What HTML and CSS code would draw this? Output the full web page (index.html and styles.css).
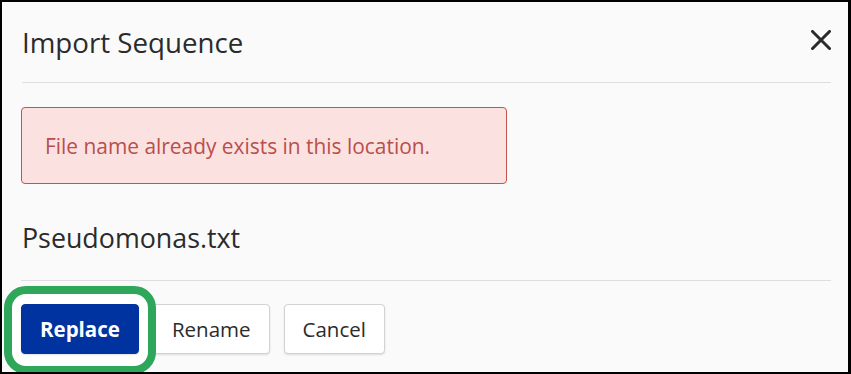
FILE: index.html
```html
<!DOCTYPE html>
<html lang="en">
<head>
  <meta charset="UTF-8">
  <meta name="viewport" content="width=device-width, initial-scale=1.0">
  <title>Import Sequence</title>
  <link rel="stylesheet" href="styles.css">
</head>
<body>
  <div class="dialog">
    <!-- Header -->
    <div class="dialog-header">
      <h2>Import Sequence</h2>
      <button class="close-btn" aria-label="Close">
        <svg width="20" height="20" viewBox="0 0 20 20">
          <path d="M1.5 1.5 L18.5 18.5 M18.5 1.5 L1.5 18.5" stroke="#2b2b2b" stroke-width="3" stroke-linecap="square"/>
        </svg>
      </button>
    </div>

    <!-- Body -->
    <div class="dialog-body">
      <div class="alert">File name already exists in this location.</div>
      <p class="file-name">Pseudomonas.txt</p>
    </div>

    <!-- Footer -->
    <div class="dialog-footer">
      <span class="highlight-ring"></span>
      <button class="btn btn-primary">Replace</button>
      <button class="btn">Rename</button>
      <button class="btn">Cancel</button>
    </div>
  </div>
</body>
</html>
```

FILE: styles.css
```css
html, body {
  margin: 0;
  padding: 0;
}
body {
  font-family: "Open Sans", "Noto Sans", Arial, sans-serif;
  color: #2b2b2b;
  background: #fafafa;
}
.dialog {
  position: relative;
  box-sizing: border-box;
  width: 851px;
  height: 374px;
  border-style: solid;
  border-color: #000;
  border-width: 2px 3px 2px 2px;
  background: #fafafa;
  overflow: hidden;
}
.dialog-header {
  display: flex;
  align-items: center;
  justify-content: space-between;
  height: 80px;
  margin: 0 17px 0 20px;
  border-bottom: 1px solid #dedede;
}
.dialog-header h2 {
  margin: 0;
  font-size: 27.7px;
  font-weight: 500;
  color: #2b2b2b;
}
.close-btn {
  display: flex;
  align-items: center;
  justify-content: center;
  width: 20px;
  height: 20px;
  padding: 0;
  margin-top: -4px;
  border: none;
  background: none;
}
.dialog-body {
  margin: 0 17px 0 19px;
  padding-top: 24px;
  height: 173px;
  border-bottom: 1px solid #dedede;
}
.alert {
  box-sizing: border-box;
  width: 486px;
  height: 77px;
  padding: 0 23px;
  display: flex;
  align-items: center;
  background: #fbe2e1;
  border: 1px solid #c4524f;
  border-radius: 4px;
  color: #b84f4c;
  font-size: 20.9px;
}
.file-name {
  margin: 36px 0 0 1px;
  font-size: 26.8px;
  line-height: 36px;
  color: #2b2b2b;
}
.dialog-footer {
  display: flex;
  gap: 14px;
  padding: 23px 0 0 19px;
}
.btn {
  height: 50px;
  padding: 0 18px;
  border: 1px solid #d2d2d2;
  border-radius: 4px;
  background: #fff;
  box-shadow: 0 1px 2px rgba(0, 0, 0, 0.12);
  font-family: "Open Sans", "Noto Sans", Arial, sans-serif;
  font-size: 20.5px;
  color: #2b2b2b;
}
.btn-primary {
  position: relative;
  z-index: 2;
  background: #0033a0;
  border-color: #0033a0;
  color: #fff;
  font-weight: 700;
}
.highlight-ring {
  position: absolute;
  left: 2px;
  top: 284px;
  width: 136px;
  height: 72px;
  border: 8px solid #2ea75b;
  border-radius: 22px;
  background: #fff;
  z-index: 1;
}
```
